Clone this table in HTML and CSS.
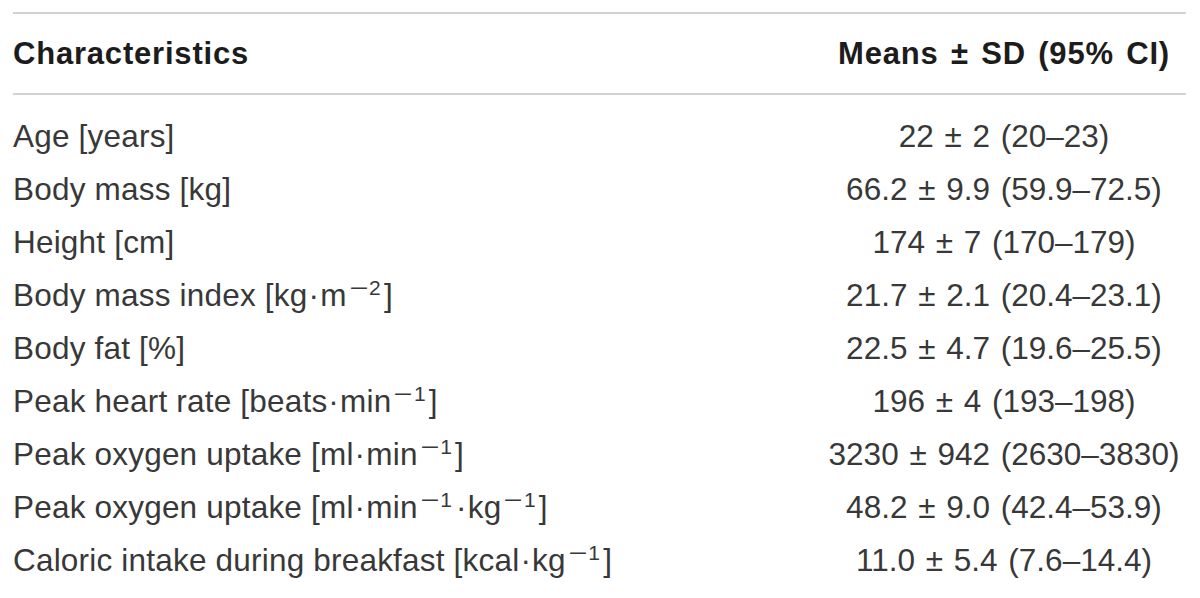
FILE: index.html
```html
<!DOCTYPE html>
<html lang="en">
<head>
<meta charset="utf-8">
<title>Characteristics</title>
<link rel="stylesheet" href="styles.css">
</head>
<body>
<div class="page">
  <table class="data">
    <colgroup>
      <col class="col-label">
      <col class="col-value">
    </colgroup>
    <thead>
      <tr>
        <th class="label">Characteristics</th>
        <th class="value">Means ± SD (95% CI)</th>
      </tr>
    </thead>
    <tbody>
      <tr><td class="label">Age [years]</td><td class="value">22 ± 2 (20–23)</td></tr>
      <tr><td class="label">Body mass [kg]</td><td class="value">66.2 ± 9.9 (59.9–72.5)</td></tr>
      <tr><td class="label">Height [cm]</td><td class="value">174 ± 7 (170–179)</td></tr>
      <tr><td class="label">Body mass index [kg<span class="dot">·</span>m<sup><span class="minus">−</span>2</sup>]</td><td class="value">21.7 ± 2.1 (20.4–23.1)</td></tr>
      <tr><td class="label">Body fat [%]</td><td class="value">22.5 ± 4.7 (19.6–25.5)</td></tr>
      <tr><td class="label">Peak heart rate [beats<span class="dot">·</span>min<sup><span class="minus">−</span>1</sup>]</td><td class="value">196 ± 4 (193–198)</td></tr>
      <tr><td class="label">Peak oxygen uptake [ml<span class="dot">·</span>min<sup><span class="minus">−</span>1</sup>]</td><td class="value">3230 ± 942 (2630–3830)</td></tr>
      <tr><td class="label">Peak oxygen uptake [ml<span class="dot">·</span>min<sup><span class="minus">−</span>1</sup><span class="dot">·</span>kg<sup><span class="minus">−</span>1</sup>]</td><td class="value">48.2 ± 9.0 (42.4–53.9)</td></tr>
      <tr><td class="label">Caloric intake during breakfast [kcal<span class="dot">·</span>kg<sup><span class="minus">−</span>1</sup>]</td><td class="value">11.0 ± 5.4 (7.6–14.4)</td></tr>
    </tbody>
  </table>
</div>
</body>
</html>
```
FILE: styles.css
```css
html, body {
  margin: 0;
  padding: 0;
  background: #ffffff;
}

.page {
  padding: 12px 14px 0 13px;
}

.data {
  width: 1173px;
  border-collapse: collapse;
  font-family: "Liberation Sans", Arial, Helvetica, sans-serif;
  font-size: 31.5px;
  color: #383838;
}

.col-label { width: 809px; }
.col-value { width: 364px; }

.data thead tr {
  border-top: 2px solid #d2d2d2;
  border-bottom: 2px solid #d2d2d2;
}

.data th {
  font-size: 31px;
  font-weight: bold;
  color: #1c1c1c;
  line-height: 79px;
  padding: 0;
  white-space: nowrap;
  letter-spacing: 0.8px;
  word-spacing: 3px;
}

.data td {
  line-height: 53px;
  padding: 0;
  white-space: nowrap;
}

.data td.label {
  letter-spacing: 0.2px;
}

.data td.value {
  word-spacing: 2px;
}

.data tbody tr:first-child td {
  padding-top: 15px;
}

.label { text-align: left; }
.value { text-align: center; }

.dot {
  margin: 0 1px;
}

.data sup {
  font-size: 21px;
  line-height: 0;
  vertical-align: 11px;
  margin-left: 3px;
  margin-right: 3px;
}

.minus {
  display: inline-block;
  transform: scaleX(1.55);
  margin: 0 4px 0 3px;
}
```
